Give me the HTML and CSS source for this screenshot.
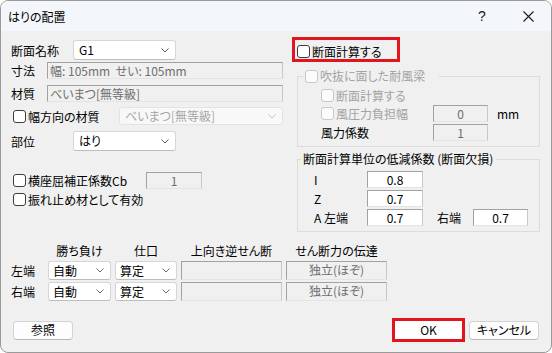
FILE: index.html
```html
<!DOCTYPE html>
<html lang="ja">
<head>
<meta charset="utf-8">
<title>はりの配置</title>
<link rel="stylesheet" href="styles.css">
</head>
<body>
<div class="window">
  <header class="titlebar">
    <span class="title">はりの配置</span>
    <span class="tb-btn help">?</span>
    <span class="tb-btn close"><svg width="11" height="11" viewBox="0 0 11 11"><path d="M0.5 0.5L10.5 10.5M10.5 0.5L0.5 10.5" stroke="#1a1a1a" stroke-width="1.1" fill="none"/></svg></span>
  </header>
  <main class="body">
    <div class="upper">
      <section class="left">
        <div class="row r1">
          <span class="lbl w62">断面名称</span>
          <div class="combo w103"><span class="val">G1</span><svg class="chev" width="8" height="5" viewBox="0 0 8 5"><path d="M0.5 0.5L4 4L7.5 0.5" fill="none" stroke="#5a5a5a"/></svg></div>
        </div>
        <div class="row r2">
          <span class="lbl w36">寸法</span>
          <div class="box ro w236">幅: 105mm&nbsp;&nbsp;せい: 105mm</div>
        </div>
        <div class="row r3">
          <span class="lbl w36">材質</span>
          <div class="box ro w236">べいまつ[無等級]</div>
        </div>
        <div class="row r4">
          <span class="chk w108"><span class="cb"></span>幅方向の材質</span>
          <div class="combo dis w164"><span class="val">べいまつ[無等級]</span><svg class="chev" width="8" height="5" viewBox="0 0 8 5"><path d="M0.5 0.5L4 4L7.5 0.5" fill="none" stroke="#c4c4c4"/></svg></div>
        </div>
        <div class="row r5">
          <span class="lbl w62">部位</span>
          <div class="combo w103"><span class="val">はり</span><svg class="chev" width="8" height="5" viewBox="0 0 8 5"><path d="M0.5 0.5L4 4L7.5 0.5" fill="none" stroke="#5a5a5a"/></svg></div>
        </div>
        <div class="row r6">
          <span class="chk w133"><span class="cb"></span>横座屈補正係数Cb</span>
          <div class="box ro w56 center">1</div>
        </div>
        <div class="row r7">
          <span class="chk"><span class="cb"></span>振れ止め材として有効</span>
        </div>
      </section>

      <section class="right">
        <div class="highlight check-hl">
          <span class="chk"><span class="cb"></span>断面計算する</span>
        </div>

        <fieldset class="group g1">
          <legend class="lg1"><span class="chk disabled"><span class="cb"></span>吹抜に面した耐風梁</span></legend>
          <div class="grow ga">
            <span class="chk disabled"><span class="cb"></span>断面計算する</span>
          </div>
          <div class="grow gb">
            <span class="chk disabled w112"><span class="cb"></span>風圧力負担幅</span>
            <div class="box ro w55 center">0</div>
            <span class="unit">mm</span>
          </div>
          <div class="grow gc">
            <span class="lbl w112">風力係数</span>
            <div class="box ro w55 center">1</div>
          </div>
        </fieldset>

        <fieldset class="group g2">
          <legend class="lg2">断面計算単位の低減係数 (断面欠損)</legend>
          <div class="grow2 gr1">
            <span class="lbl w53">I</span>
            <div class="box ed w56 center">0.8</div>
          </div>
          <div class="grow2 gr2">
            <span class="lbl w53">Z</span>
            <div class="box ed w56 center">0.7</div>
          </div>
          <div class="grow2 gr3">
            <span class="lbl w53">A 左端</span>
            <div class="box ed w56 center">0.7</div>
            <span class="lbl w36 ml14">右端</span>
            <div class="box ed w55 center">0.7</div>
          </div>
        </fieldset>
      </section>
    </div>

    <div class="table">
      <span></span>
      <span class="th">勝ち負け</span>
      <span class="th">仕口</span>
      <span class="th">上向き逆せん断</span>
      <span class="th">せん断力の伝達</span>

      <span class="rl">左端</span>
      <div class="combo"><span class="val">自動</span><svg class="chev" width="8" height="5" viewBox="0 0 8 5"><path d="M0.5 0.5L4 4L7.5 0.5" fill="none" stroke="#6a6a6a"/></svg></div>
      <div class="combo"><span class="val">算定</span><svg class="chev" width="8" height="5" viewBox="0 0 8 5"><path d="M0.5 0.5L4 4L7.5 0.5" fill="none" stroke="#6a6a6a"/></svg></div>
      <div class="box ro"></div>
      <div class="box ro center">独立(ほぞ)</div>

      <span class="rl">右端</span>
      <div class="combo"><span class="val">自動</span><svg class="chev" width="8" height="5" viewBox="0 0 8 5"><path d="M0.5 0.5L4 4L7.5 0.5" fill="none" stroke="#6a6a6a"/></svg></div>
      <div class="combo"><span class="val">算定</span><svg class="chev" width="8" height="5" viewBox="0 0 8 5"><path d="M0.5 0.5L4 4L7.5 0.5" fill="none" stroke="#6a6a6a"/></svg></div>
      <div class="box ro"></div>
      <div class="box ro center">独立(ほぞ)</div>
    </div>

    <div class="buttons">
      <button class="btn w60">参照</button>
      <span class="spacer"></span>
      <div class="highlight ok-hl"><button class="btn ok">OK</button></div>
      <button class="btn w70">キャンセル</button>
    </div>
  </main>
</div>
</body>
</html>
```

FILE: styles.css
```css
html, body {
  margin: 0;
  padding: 0;
  background: #ffffff;
}

body {
  font-family: "Noto Sans CJK JP", "Noto Sans", sans-serif;
  font-size: 12px;
  color: #000;
  font-feature-settings: "palt";
}

.window {
  width: 552px;
  height: 353px;
  box-sizing: border-box;
  border: 1px solid #9a9a9a;
  border-radius: 8px;
  background: #f0f0f0;
  overflow: hidden;
  display: flex;
  flex-direction: column;
}

/* title bar */
.titlebar {
  flex: none;
  height: 30px;
  display: flex;
  align-items: center;
  padding-left: 7px;
  background: #f3f6fa;
}
.title {
  flex: 1;
  line-height: 17px;
}
.tb-btn {
  width: 46px;
  height: 30px;
  display: flex;
  align-items: center;
  justify-content: center;
}
.help {
  font-family: "Liberation Sans", sans-serif;
  font-size: 14px;
  color: #1a1a1a;
}

/* body */
.body {
  padding-top: 6px;
}
.upper {
  display: flex;
}
.left {
  width: 291px;
  box-sizing: border-box;
  padding-left: 10px;
  padding-top: 3px;
  display: flex;
  flex-direction: column;
}
.right {
  width: 248px;
  display: flex;
  flex-direction: column;
}

.row {
  display: flex;
  align-items: center;
}
.r1 { height: 20px; }
.r2 { height: 17px; margin-top: 2px; }
.r3 { height: 17px; margin-top: 6px; }
.r4 { height: 18px; margin-top: 5px; }
.r5 { height: 20px; margin-top: 6px; }
.r6 { height: 17px; margin-top: 21px; }
.r7 { height: 17px; margin-top: 2px; }

.left .chk { margin-left: 2px; }
.left .w108 { width: 106px; }
.left .w133 { width: 133px; }

.lbl {
  line-height: 17px;
  white-space: nowrap;
  flex: none;
}
.w36 { width: 36px; }
.w53 { width: 53px; }
.w55 { width: 55px; }
.w56 { width: 56px; }
.w60 { width: 60px; }
.w62 { width: 62px; }
.w70 { width: 70px; }
.w103 { width: 103px; }
.w112 { width: 112px; }
.w164 { width: 164px; }
.w236 { width: 236px; }
.ml14 { margin-left: 14px; }

/* checkbox */
.chk {
  display: flex;
  align-items: center;
  white-space: nowrap;
  line-height: 17px;
  flex: none;
}
.cb {
  width: 13px;
  height: 13px;
  box-sizing: border-box;
  border: 1px solid #3c3c3c;
  border-radius: 3px;
  background: #ffffff;
  margin-right: 2px;
  flex: none;
}
.chk.disabled {
  color: #a3a3a3;
}
.chk.disabled .cb {
  border-color: #c8c8c8;
  background: #fbfbfb;
}

/* combo box */
.combo {
  box-sizing: border-box;
  height: 100%;
  display: flex;
  align-items: center;
  justify-content: space-between;
  background: #ffffff;
  border: 1px solid #d6d6d6;
  border-bottom-color: #bdbdbd;
  border-radius: 3px;
  padding: 0 6px 0 5px;
  flex: none;
}
.combo .val {
  line-height: 16px;
  white-space: nowrap;
}
.chev {
  flex: none;
}
.combo.dis {
  background: #f8f8f8;
  border-color: #e3e3e3;
  color: #a6a6a6;
}

/* edit boxes */
.box {
  box-sizing: border-box;
  height: 100%;
  border: 1px solid;
  border-color: #a2a2a2 #c8c8c8 #e4e4e4 #a2a2a2;
  padding: 0 2px;
  line-height: 15px;
  white-space: nowrap;
  overflow: hidden;
  flex: none;
}
.box.ro {
  background: #f0f0f0;
  color: #6e6e6e;
}
.box.ed {
  background: #ffffff;
  color: #000;
}
.center {
  text-align: center;
}

/* highlight (red annotation frame) */
.highlight {
  box-sizing: border-box;
  border: 3px solid #e2141d;
}
.check-hl {
  width: 108px;
  height: 25px;
  display: flex;
  align-items: center;
  padding: 3px 0 0 2px;
}

/* group boxes */
.group {
  margin: 0 0 0 5px;
  padding: 0 0 5px 0;
  width: 243px;
  box-sizing: border-box;
  border: 1px solid #dcdcdc;
  min-inline-size: 0;
}
.g1 { margin-top: 6px; }
.g2 { margin-top: 4px; }

.lg1 {
  margin-left: 6px;
  padding: 0 14px 0 1px;
  height: 16px;
  line-height: 16px;
}
.lg1 .chk { line-height: 16px; height: 16px; }
.lg2 {
  margin-left: 3px;
  padding: 0 3px 0 2px;
  height: 16px;
  line-height: 16px;
  white-space: nowrap;
}

.grow {
  display: flex;
  align-items: center;
  padding-left: 23px;
}
.ga { height: 16px; margin-top: 3px; }
.gb { height: 17px; margin-top: 2px; }
.gc { height: 17px; margin-top: 2px; }
.unit {
  margin-left: 9px;
  line-height: 17px;
}

.grow2 {
  display: flex;
  align-items: center;
  padding-left: 16px;
  height: 17px;
}
.gr1 { margin-top: 4px; }
.gr2 { margin-top: 2px; }
.gr3 { margin-top: 2px; }

/* table */
.table {
  display: grid;
  grid-template-columns: 33px 63px 62px 101px 101px;
  grid-template-rows: 17px 19px 19px;
  column-gap: 4px;
  row-gap: 2px;
  margin-top: 10px;
  padding-left: 10px;
}
.th {
  text-align: center;
  line-height: 17px;
  white-space: nowrap;
}
.rl {
  line-height: 19px;
  white-space: nowrap;
}
.table .combo {
  padding: 0 6px 0 4px;
}

/* buttons */
.buttons {
  display: flex;
  align-items: center;
  height: 24px;
  margin-top: 17px;
  padding: 0 12px;
}
.spacer {
  flex: 1;
}
.btn {
  font: inherit;
  font-feature-settings: "palt";
  color: #000;
  height: 19px;
  box-sizing: border-box;
  padding: 0;
  background: #fdfdfd;
  border: 1px solid #d3d3d3;
  border-bottom-color: #b8b8b8;
  border-radius: 4px;
  line-height: 16px;
  flex: none;
}
.ok-hl {
  width: 73px;
  height: 24px;
  display: flex;
  margin-right: 4px;
}
.btn.ok {
  width: 100%;
  height: 100%;
  border: none;
  border-radius: 0;
  background: #ffffff;
}
```
